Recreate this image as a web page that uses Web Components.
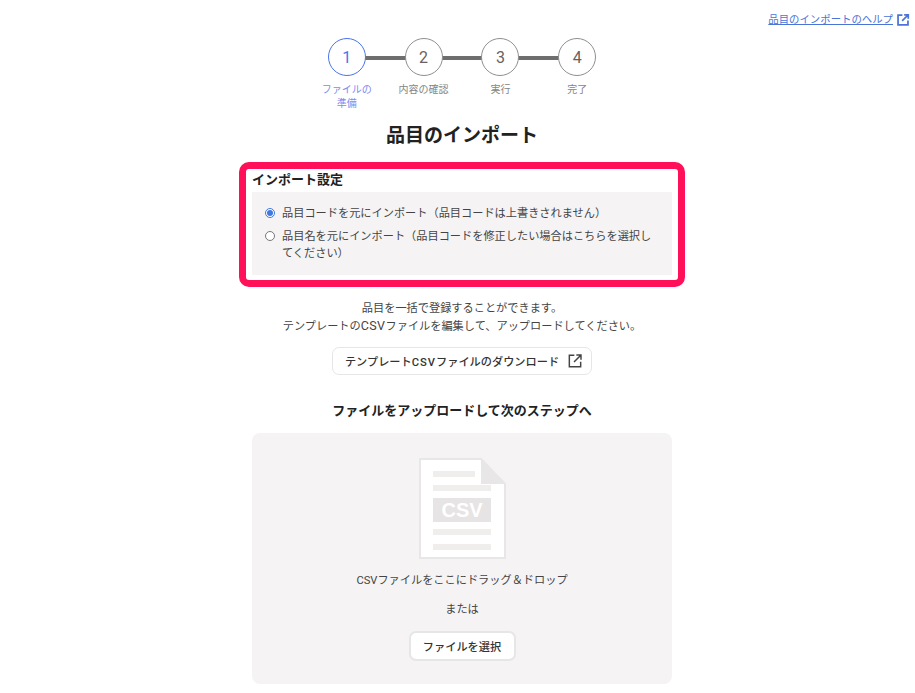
<!DOCTYPE html>
<html lang="ja"><head><meta charset="utf-8"><style>
html,body{margin:0;padding:0;background:#fff;overflow:hidden}
body{font-family:Roboto,"Noto Sans CJK JP",sans-serif;color:#333;font-size:11.2px}
</style></head><body>
<import-page></import-page>
<script>
const ext=(s,c,w=2.4)=>`<svg width="${s}" height="${s}" viewBox="0 0 24 24" fill="none" stroke="${c}" stroke-width="${w}" style="display:block;flex:none"><path d="M11 3.5H3.5v17h17V13"/><path d="M14 3h7v7M21 3 10.5 13.5"/></svg>`;
class HelpLink extends HTMLElement{constructor(){super();this.attachShadow({mode:'open'}).innerHTML=`<style>:host{display:flex;justify-content:flex-end;align-items:center;gap:3px;height:14px;color:#4a74d6}a{color:inherit;font-size:10.4px;line-height:14px;text-decoration:underline}</style><a><slot></slot></a>${ext(14,'#4a74d6',3)}`}}
customElements.define('help-link',HelpLink);
class StepBar extends HTMLElement{constructor(){super();this.attachShadow({mode:'open'}).innerHTML=`<style>:host{display:flex;justify-content:center}</style><slot></slot>`}}
customElements.define('step-bar',StepBar);
class StepItem extends HTMLElement{constructor(){super();const a=this.hasAttribute('active'),f=this.hasAttribute('first');this.attachShadow({mode:'open'}).innerHTML=`<style>
:host{display:flex;flex-direction:column;align-items:center;width:76.8px;position:relative}
.c{box-sizing:border-box;width:38px;height:38px;border-radius:50%;border:1px solid ${a?'#4a74e8':'#8f8f8f'};background:#fff;display:flex;align-items:center;justify-content:center;font-size:16px;color:${a?'#4a74e8':'#6b6160'};position:relative;z-index:1}
.l{position:absolute;top:18px;left:-39px;width:78px;height:4px;background:#6e6e6e;display:${f?'none':'block'}}
.t{width:52px;margin-top:7px;text-align:center;font-size:10px;line-height:14px;color:${a?'#7c8cf0':'#858585'}}
</style><div class="l"></div><div class="c">${this.getAttribute('n')}</div><div class="t"><slot></slot></div>`}}
customElements.define('step-item',StepItem);
class RadioRow extends HTMLElement{constructor(){super();const a=this.hasAttribute('checked');this.attachShadow({mode:'open'}).innerHTML=`<style>
:host{display:flex;gap:7px;font-size:11.2px;line-height:17px;color:#444}
.r{flex:none;box-sizing:border-box;width:10px;height:10px;margin-top:3px;border-radius:50%;border:1px solid ${a?'#3f78e0':'#777'};background:#fff;display:flex;align-items:center;justify-content:center}
.r i{display:${a?'block':'none'};width:6px;height:6px;border-radius:50%;background:#3f78e0}
</style><span class="r"><i></i></span><span><slot></slot></span>`}}
customElements.define('radio-row',RadioRow);
class UiButton extends HTMLElement{constructor(){super();this.attachShadow({mode:'open'}).innerHTML=`<style>
:host{display:inline-flex;box-sizing:border-box;align-items:center;justify-content:center;gap:8px;border:2px solid #e6e6e6;border-radius:7px;background:#fff;font-weight:500;color:#333;font-size:11.2px}
</style><slot></slot>`}}
customElements.define('ui-button',UiButton);
class CsvIcon extends HTMLElement{constructor(){super();this.attachShadow({mode:'open'}).innerHTML=`<style>:host{display:block;width:88px;height:103px}svg{display:block}text{font:700 20px "Liberation Sans",Arial,sans-serif;fill:#fff}</style>
<svg width="88" height="103" viewBox="0 0 88 103"><path d="M2 2H63L87 27V101H2Z" fill="#fff" stroke="#e8e6e6" stroke-width="2"/><path d="M63 2 87 27H63Z" fill="#e8e6e6"/>
<g fill="#efeeed"><rect x="15" y="14" width="42" height="6"/><rect x="15" y="28" width="58" height="6"/><rect x="15" y="72" width="58" height="6"/><rect x="15" y="87" width="58" height="6"/></g><rect x="15" y="41" width="58" height="24" fill="#e6e4e4"/><text x="44" y="60" text-anchor="middle">CSV</text></svg>`}}
customElements.define('csv-icon',CsvIcon);
class ImportPage extends HTMLElement{constructor(){super();this.attachShadow({mode:'open'}).innerHTML=`<style>
:host{display:block;width:924px;height:693px;position:relative;overflow:hidden}
help-link{padding:13px 14px 0 0}
step-bar{margin-top:11px}
main{width:420px;margin:0 auto;display:flex;flex-direction:column;align-items:stretch}
h1{margin:11px 0 0;font-size:19px;line-height:28px;font-weight:700;text-align:center;color:#222}
.st{margin:21px 0 0;font-size:13px;line-height:18px;font-weight:700;color:#222}
.box{margin-top:3px;background:#f5f3f4;padding:13px 14px 13px 13px;display:flex;flex-direction:column;gap:6px}
.desc{margin:25px 0 0;text-align:center;line-height:17px;color:#444}
.desc span{font-size:12.5px;letter-spacing:.4px}
.btn1{align-self:center;width:260px;height:28px;margin-top:12px;border-width:1px;padding-left:4px}
.btn1 span{letter-spacing:1px}
.h2{margin:26px 0 0;font-size:13px;line-height:20px;font-weight:700;text-align:center;color:#222}
.drop{margin-top:12px;height:251px;box-sizing:border-box;background:#f5f3f4;border-radius:8px;padding-top:24px;display:flex;flex-direction:column;align-items:center}
.d1{margin-top:12px;line-height:17px;color:#444}.d2{margin-top:12px;line-height:17px;color:#444}
.btn2{width:107px;height:30px;margin-top:13px}
.hl{position:absolute;left:239px;top:162px;width:446px;height:125px;box-sizing:border-box;border:7px solid #ff1058;border-radius:10px;pointer-events:none}
</style>
<help-link>品目のインポートのヘルプ</help-link>
<step-bar><step-item n="1" active first>ファイルの準備</step-item><step-item n="2">内容の確認</step-item><step-item n="3">実行</step-item><step-item n="4">完了</step-item></step-bar>
<main>
<h1>品目のインポート</h1>
<div class="st">インポート設定</div>
<div class="box"><radio-row checked>品目コードを元にインポート（品目コードは上書きされません）</radio-row><radio-row>品目名を元にインポート（品目コードを修正したい場合はこちらを選択してください）</radio-row></div>
<div class="desc">品目を一括で登録することができます。<br>テンプレートの<span>CSV</span>ファイルを編集して、アップロードしてください。</div>
<ui-button class="btn1"><div>テンプレート<span>CSV</span>ファイルのダウンロード</div>${ext(16,'#444',2.2)}</ui-button>
<div class="h2">ファイルをアップロードして次のステップへ</div>
<div class="drop"><csv-icon></csv-icon><div class="d1">CSVファイルをここにドラッグ＆ドロップ</div><div class="d2">または</div><ui-button class="btn2">ファイルを選択</ui-button></div>
</main><div class="hl"></div>`}}
customElements.define('import-page',ImportPage);
</script></body></html>
